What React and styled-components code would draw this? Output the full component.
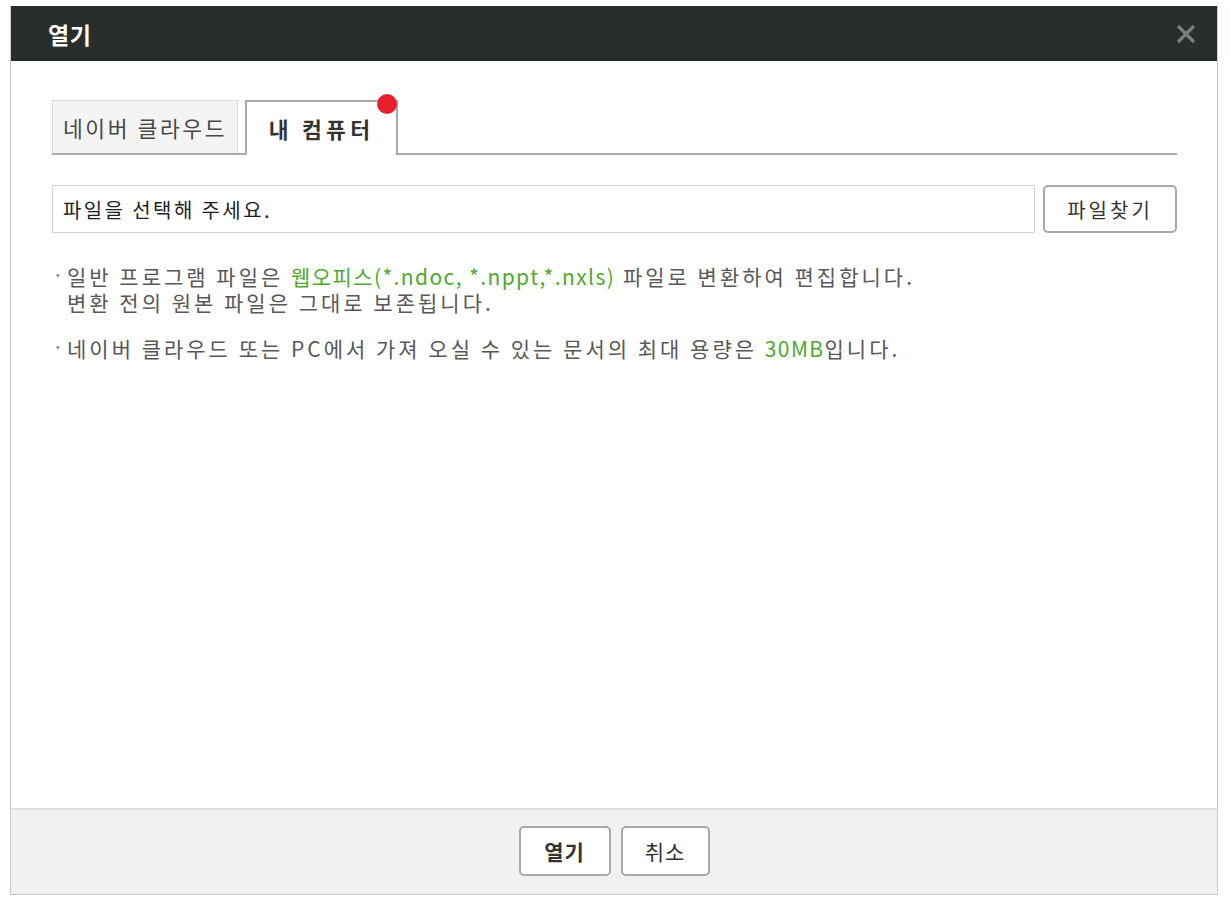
import React from "react";
import styled, { createGlobalStyle } from "styled-components";

const Global = createGlobalStyle`
  html, body { margin: 0; padding: 0; background: #ffffff; }
  body { font-family: "Noto Sans CJK KR", "Noto Sans", sans-serif; }
  * { box-sizing: border-box; }
`;

const Page = styled.div`
  padding: 6px 0 0 10px;
`;

const Dialog = styled.div`
  width: 1208px;
  height: 889px;
  display: flex;
  flex-direction: column;
  border: 1px solid #c9c9c9;
  border-top: none;
  background: #fff;
`;

const Header = styled.div`
  height: 55px;
  flex: none;
  background: #272e2c;
  display: flex;
  align-items: center;
  justify-content: space-between;
  padding: 0 20px 0 37px;
`;

const Title = styled.h1`
  margin: 0;
  color: #fff;
  font-size: 23px;
  font-weight: 700;
  letter-spacing: 0.5px;
`;

const Close = styled.button`
  width: 22px;
  height: 22px;
  padding: 0;
  border: none;
  background: transparent;
  display: flex;
  align-items: center;
  justify-content: center;
  cursor: pointer;
`;

const Body = styled.div`
  flex: 1;
  padding: 39px 40px 0 41px;
`;

const TabBar = styled.div`
  display: flex;
  align-items: flex-end;
  gap: 7px;
  height: 55px;
  border-bottom: 2px solid #aaaaaa;
`;

const Tab = styled.div`
  position: relative;
  width: ${(p) => p.$w}px;
  height: ${(p) => (p.$active ? 55 : 53)}px;
  margin-bottom: ${(p) => (p.$active ? -2 : 0)}px;
  display: flex;
  align-items: center;
  justify-content: center;
  font-size: 21.5px;
  letter-spacing: ${(p) => (p.$active ? 4.3 : 2.6)}px;
  color: ${(p) => (p.$active ? "#333" : "#484848")};
  font-weight: ${(p) => (p.$active ? 700 : 400)};
  background: ${(p) => (p.$active ? "#fff" : "#f4f4f4")};
  border: ${(p) => (p.$active ? "2px solid #aaaaaa" : "1px solid #dedede")};
  border-bottom: none;
`;

const Dot = styled.span`
  position: absolute;
  top: -8px;
  right: -1px;
  width: 20px;
  height: 20px;
  border-radius: 50%;
  background: #e61f2b;
`;

const FileRow = styled.div`
  display: flex;
  gap: 8px;
  margin-top: 30px;
  height: 48px;
`;

const FileField = styled.div`
  flex: 1;
  border: 1px solid #d2d2d2;
  display: flex;
  align-items: center;
  padding-left: 10px;
  font-size: 20px;
  letter-spacing: 2.4px;
  color: #1e1e1e;
`;

const Button = styled.button`
  font-family: inherit;
  width: ${(p) => p.$w}px;
  height: ${(p) => p.$h || 48}px;
  background: #fff;
  border: 2px solid #a9a9a9;
  border-radius: 5px;
  font-size: ${(p) => p.$fs || 20}px;
  font-weight: ${(p) => (p.$bold ? 700 : 400)};
  letter-spacing: ${(p) => p.$ls ?? 1}px;
  color: #333;
  padding: 0;
  cursor: pointer;
`;

const Notes = styled.ul`
  list-style: none;
  margin: 30px 0 0;
  padding: 0;
  display: flex;
  flex-direction: column;
  gap: 20px;
`;

const Note = styled.li`
  display: flex;
  font-size: 21px;
  line-height: 26px;
  color: #585858;
  letter-spacing: 3px;
`;

const Bullet = styled.span`
  flex: none;
  width: 15px;
  padding: 1px 0 0 0;
  line-height: 20px;
  color: #888;
  letter-spacing: 0;
`;

const Green = styled.span`
  color: #4fa82f;
  letter-spacing: 1.4px;
`;

const Footer = styled.div`
  height: 86px;
  flex: none;
  background: #f1f1f1;
  border-top: 2px solid #dedede;
  display: flex;
  align-items: center;
  justify-content: center;
  gap: 10px;
  padding-bottom: 2px;
`;

export default function App() {
  return (
    <>
      <Global />
      <Page>
        <Dialog>
          <Header>
            <Title>열기</Title>
            <Close aria-label="닫기">
              <svg width="20" height="20" viewBox="0 0 20 20">
                <path d="M2 2 L18 18 M18 2 L2 18" stroke="#7a7f7d" strokeWidth="3.2" />
              </svg>
            </Close>
          </Header>
          <Body>
            <TabBar>
              <Tab $w={186}>네이버 클라우드</Tab>
              <Tab $w={153} $active>
                내 컴퓨터
                <Dot />
              </Tab>
            </TabBar>
            <FileRow>
              <FileField>파일을 선택해 주세요.</FileField>
              <Button $w={134} $ls={3}>파일찾기</Button>
            </FileRow>
            <Notes>
              <Note>
                <Bullet>·</Bullet>
                <span>
                  일반 프로그램 파일은 <Green>웹오피스(*.ndoc, *.nppt,*.nxls)</Green> 파일로 변환하여 편집합니다.
                  <br />
                  변환 전의 원본 파일은 그대로 보존됩니다.
                </span>
              </Note>
              <Note>
                <Bullet>·</Bullet>
                <span>
                  네이버 클라우드 또는 PC에서 가져 오실 수 있는 문서의 최대 용량은 <Green>30MB</Green>입니다.
                </span>
              </Note>
            </Notes>
          </Body>
          <Footer>
            <Button $w={92} $h={50} $fs={21} $bold>열기</Button>
            <Button $w={89} $h={50} $fs={21}>취소</Button>
          </Footer>
        </Dialog>
      </Page>
    </>
  );
}
